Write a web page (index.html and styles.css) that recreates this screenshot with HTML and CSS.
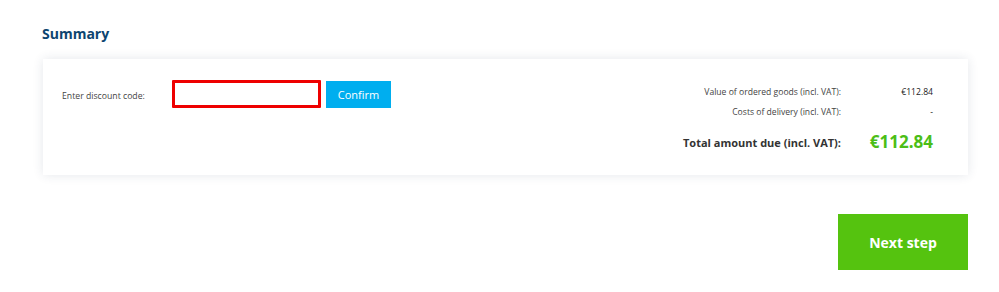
FILE: index.html
```html
<!DOCTYPE html>
<html lang="en">
<head>
<meta charset="utf-8">
<title>Summary</title>
<link rel="stylesheet" href="styles.css">
</head>
<body>
<div class="page">
  <h2 class="title">Summary</h2>
  <div class="card">
    <div class="discount">
      <label class="discount-label" for="code">Enter discount code:</label>
      <input class="discount-input" id="code" type="text">
      <button class="confirm-btn" type="button">Confirm</button>
    </div>
    <div class="totals">
      <div class="t-label">Value of ordered goods (incl. VAT):</div>
      <div class="t-value">€112.84</div>
      <div class="t-label">Costs of delivery (incl. VAT):</div>
      <div class="t-value">-</div>
      <div class="t-label t-total-label">Total amount due (incl. VAT):</div>
      <div class="t-value t-total-value">€112.84</div>
    </div>
  </div>
  <div class="actions">
    <button class="next-btn" type="button">Next step</button>
  </div>
</div>
</body>
</html>
```

FILE: styles.css
```css
* { box-sizing: border-box; }
html, body { margin: 0; padding: 0; background: #fff; }
body { font-family: "Open Sans", "Noto Sans", sans-serif; color: #333; }

.page {
  width: 926px;
  margin-left: 42px;
  padding-top: 24px;
}

.title {
  margin: 0;
  font-size: 14px;
  line-height: 20px;
  font-weight: 700;
  color: #0d4570;
}

.card {
  margin-top: 15px;
  margin-left: 1px;
  height: 116px;
  background: #fff;
  box-shadow: 0 0 10px rgba(40, 60, 90, 0.12);
  display: flex;
  justify-content: space-between;
  align-items: flex-start;
  padding: 21px 35px 0 19px;
}

.discount {
  display: flex;
  align-items: center;
}

.discount-label {
  font-size: 8.7px;
  color: #444;
  width: 110px;
  padding-top: 4px;
}

.discount-input {
  width: 149px;
  height: 28px;
  border: 3px solid #ee0000;
  border-radius: 1px;
  background: #fff;
  margin: 0;
  padding: 0 6px;
  outline: none;
}

.confirm-btn {
  margin-left: 5px;
  width: 65px;
  height: 27px;
  border: 0;
  background: #00aeef;
  color: #fff;
  font-family: inherit;
  font-size: 11px;
  padding: 0;
  margin-top: 1px;
}

.totals {
  display: grid;
  grid-template-columns: auto 92px;
  align-items: center;
  text-align: right;
  margin-top: 2px;
}

.t-label, .t-value {
  font-size: 8.6px;
  line-height: 20px;
  color: #444;
}

.t-value { color: #222; }

.t-total-label {
  font-size: 11px;
  font-weight: 700;
  color: #333;
  line-height: 24px;
  margin-top: 9px;
}

.t-total-value {
  font-size: 17px;
  font-weight: 700;
  color: #4cbe17;
  line-height: 24px;
  margin-top: 7px;
}

.actions {
  display: flex;
  justify-content: flex-end;
  margin-top: 39px;
}

.next-btn {
  width: 130px;
  height: 56px;
  border: 0;
  background: #55c30f;
  color: #fff;
  font-family: inherit;
  font-size: 14px;
  font-weight: 700;
  padding: 0;
}
```
